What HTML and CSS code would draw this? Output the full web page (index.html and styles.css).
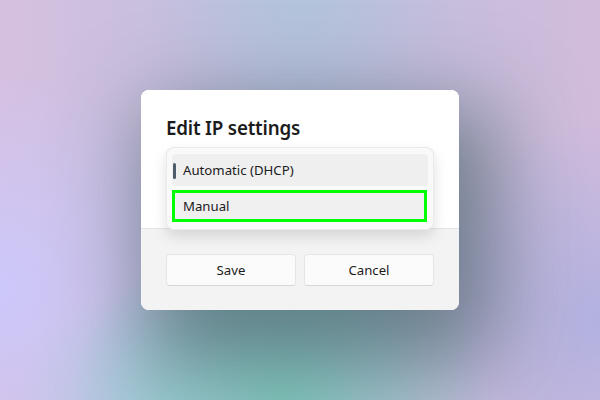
FILE: index.html
```html
<!DOCTYPE html>
<html>
<head>
<meta charset="utf-8">
<link rel="stylesheet" href="styles.css">
</head>
<body>
<div class="desktop">
  <div class="dialog">
    <div class="content">
      <h1 class="title">Edit IP settings</h1>
      <div class="popup">
        <div class="item selected"><span class="indicator"></span>Automatic (DHCP)</div>
        <div class="item focused">Manual</div>
      </div>
    </div>
    <div class="footer">
      <button class="btn">Save</button>
      <button class="btn">Cancel</button>
    </div>
  </div>
</div>
</body>
</html>
```
FILE: styles.css
```css
html, body {
  margin: 0;
  padding: 0;
}
body {
  width: 600px;
  height: 400px;
  overflow: hidden;
  font-family: "Noto Sans", "Open Sans", sans-serif;
}
.desktop {
  width: 600px;
  height: 400px;
  display: flex;
  align-items: center;
  justify-content: center;
  background:
    radial-gradient(ellipse 35% 45% at 47% 100%, rgba(130, 200, 190, 1), rgba(130, 200, 190, 0) 100%),
    radial-gradient(ellipse 25% 30% at 28% 100%, rgba(170, 205, 225, 0.9), rgba(170, 205, 225, 0) 100%),
    radial-gradient(ellipse 25% 30% at 50% 0%, rgba(178, 196, 220, 0.9), rgba(178, 196, 220, 0) 100%),
    radial-gradient(ellipse 35% 55% at 0% 72%, rgba(204, 200, 250, 1), rgba(204, 200, 250, 0) 100%),
    radial-gradient(ellipse 30% 50% at 100% 80%, rgba(178, 178, 225, 1), rgba(178, 178, 225, 0) 100%),
    linear-gradient(90deg, #d6c0e0 0%, #bcbedc 50%, #d2bcdc 100%);
}
.dialog {
  width: 318px;
  height: 220px;
  border-radius: 8px;
  background: #fff;
  display: flex;
  flex-direction: column;
  position: relative;
  box-shadow: 20px 35px 85px 18px rgba(40, 72, 76, 0.55);
}
.content {
  height: 138px;
  padding: 24px 25px 0;
  box-sizing: border-box;
  border-radius: 8px 8px 0 0;
  background: #fff;
}
.title {
  margin: 0;
  font-size: 18.8px;
  line-height: 28px;
  font-weight: 600;
  color: #1b1b1b;
  letter-spacing: -0.2px;
}
.popup {
  position: absolute;
  left: 25px;
  top: 57px;
  width: 268px;
  box-sizing: border-box;
  padding: 6px 5px 7px;
  display: flex;
  flex-direction: column;
  gap: 4px;
  background: #f9f9f9;
  border: 1px solid rgba(0, 0, 0, 0.06);
  border-radius: 8px;
  box-shadow: 0 6px 14px rgba(0, 0, 0, 0.13);
  z-index: 2;
}
.item {
  position: relative;
  height: 32px;
  box-sizing: border-box;
  padding-left: 11px;
  display: flex;
  align-items: center;
  font-size: 13.2px;
  color: #1b1b1b;
  background: #efefef;
  border-radius: 4px;
}
.indicator {
  position: absolute;
  left: 1px;
  top: 9px;
  width: 3px;
  height: 16px;
  border-radius: 2px;
  background: #4e5d6b;
}
.item.focused {
  border: 3px solid #00ff00;
  border-radius: 0;
  padding-left: 8px;
  background: #f0f0f0;
  margin-right: 1px;
}
.footer {
  flex: 1;
  display: flex;
  gap: 8px;
  padding: 25px 25px 0;
  background: #f3f3f3;
  border-top: 1px solid #e5e5e5;
  border-radius: 0 0 8px 8px;
}
.btn {
  flex: 1;
  height: 32px;
  box-sizing: border-box;
  background: #fbfbfb;
  border: 1px solid #e6e6e6;
  border-bottom-color: #d6d6d6;
  border-radius: 4px;
  font-family: inherit;
  font-size: 13.2px;
  color: #1b1b1b;
  padding: 0;
}
```
